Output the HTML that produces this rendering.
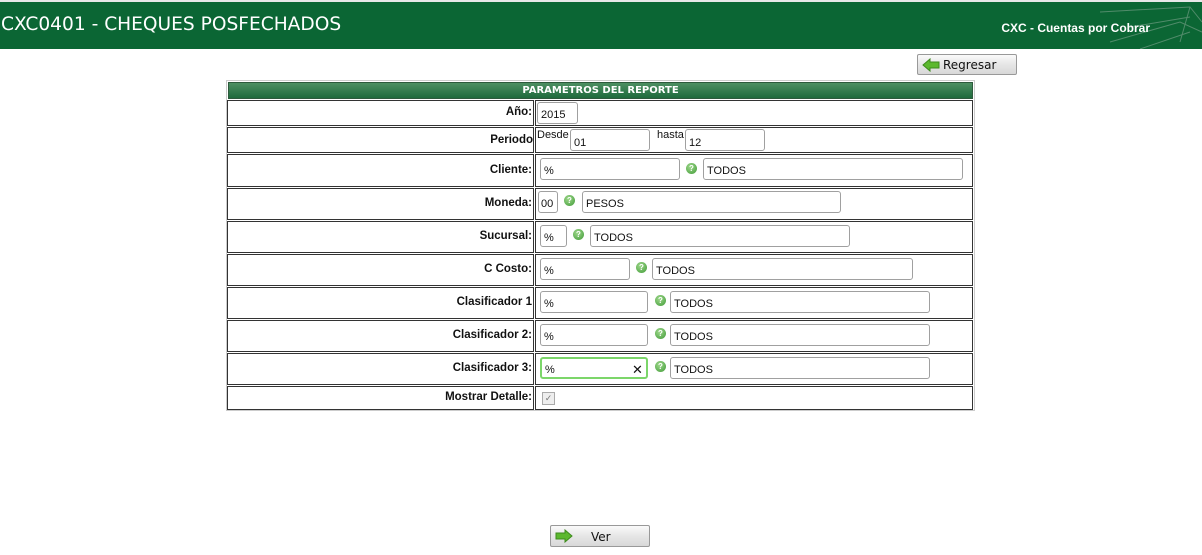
<!DOCTYPE html>
<html><head><meta charset="utf-8"><style>
body{margin:0;width:1202px;height:555px;background:#fff;position:relative;overflow:hidden;font-family:"DejaVu Sans","Liberation Sans",sans-serif;}
.a{position:absolute}
.hdr{left:0;top:0;width:1202px;height:49px;background:#0b6634;border-top:2px solid #e8e8e8;box-sizing:border-box}
.title{left:1px;top:14px;color:#fff;font-size:18.6px;letter-spacing:0}
.sub{right:52px;top:21px;color:#fff;font:bold 12px "Liberation Sans",sans-serif}
.btn{border:1px solid #999;border-radius:2px;background:linear-gradient(#fafafa,#e6e6e6 50%,#d8d8d8);box-sizing:border-box;font:12px "DejaVu Sans",sans-serif;color:#111}
.outer{left:226px;top:80px;width:749px;height:331px;border:1px solid #ccc;box-sizing:border-box}
.th{left:228px;top:82px;width:745px;height:17px;background:linear-gradient(#4d8f62,#1e6a3c);border:1px solid #2d5a3c;box-sizing:border-box;color:#fff;font:bold 10px "DejaVu Sans",sans-serif;text-align:center;line-height:15px}
.c{border:1px solid #333;box-sizing:border-box}
.lb{font:bold 11.5px "Liberation Sans",sans-serif;color:#111;text-align:right;padding-right:1px}
.in{border:1px solid #a0a0a0;border-radius:3px;box-sizing:border-box;font:11px "Liberation Sans",sans-serif;color:#111;padding-left:3px;height:22px;line-height:24px;background:#fff}
.q{width:11px;height:11px;border-radius:50%;background:radial-gradient(circle at 40% 35%,#9fd88c,#3f9a36);color:#fff;font:bold 8px sans-serif;text-align:center;line-height:11px}
.sm{font:11px "Liberation Sans",sans-serif;color:#111}
</style></head><body>
<div class="a hdr"></div>
<svg class="a" style="left:1040px;top:2px" width="162" height="47"><g stroke="#6f9c82" fill="none" opacity=".7"><path d="M60 10 L150 5 L162 20"/><path d="M70 40 L140 20 L162 30"/><path d="M100 47 L150 30"/><path d="M90 25 L150 15"/><path d="M150 5 L140 40"/></g></svg>
<div class="a title">CXC0401 - CHEQUES POSFECHADOS</div>
<div class="a sub">CXC - Cuentas por Cobrar</div>

<div class="a btn" style="left:917px;top:54px;width:100px;height:21px"><svg class="a" style="left:4px;top:3px" width="18" height="14"><path d="M1 7 L8 1 L8 4 L17 4 L17 10 L8 10 L8 13 Z" fill="#5cb82e" stroke="#3d8a1d"/></svg><span class="a" style="left:25px;top:3px">Regresar</span></div>

<div class="a outer"></div>
<div class="a th">PARAMETROS DEL REPORTE</div>

<div class="a c" style="left:227px;top:100px;width:307px;height:26px"></div><div class="a c" style="left:535px;top:100px;width:438px;height:26px"></div>
<div class="a c" style="left:227px;top:127px;width:307px;height:26px"></div><div class="a c" style="left:535px;top:127px;width:438px;height:26px"></div>
<div class="a c" style="left:227px;top:154px;width:307px;height:33px"></div><div class="a c" style="left:535px;top:154px;width:438px;height:33px"></div>
<div class="a c" style="left:227px;top:188px;width:307px;height:32px"></div><div class="a c" style="left:535px;top:188px;width:438px;height:32px"></div>
<div class="a c" style="left:227px;top:221px;width:307px;height:32px"></div><div class="a c" style="left:535px;top:221px;width:438px;height:32px"></div>
<div class="a c" style="left:227px;top:254px;width:307px;height:32px"></div><div class="a c" style="left:535px;top:254px;width:438px;height:32px"></div>
<div class="a c" style="left:227px;top:287px;width:307px;height:32px"></div><div class="a c" style="left:535px;top:287px;width:438px;height:32px"></div>
<div class="a c" style="left:227px;top:320px;width:307px;height:32px"></div><div class="a c" style="left:535px;top:320px;width:438px;height:32px"></div>
<div class="a c" style="left:227px;top:353px;width:307px;height:32px"></div><div class="a c" style="left:535px;top:353px;width:438px;height:32px"></div>
<div class="a c" style="left:227px;top:386px;width:307px;height:24px"></div><div class="a c" style="left:535px;top:386px;width:438px;height:24px"></div>

<div class="a lb" style="left:230px;width:302px;top:106px">Año:</div>
<div class="a lb" style="left:230px;width:303px;top:134px">Periodo</div>
<div class="a lb" style="left:230px;width:302px;top:164px">Cliente:</div>
<div class="a lb" style="left:230px;width:302px;top:197px">Moneda:</div>
<div class="a lb" style="left:230px;width:302px;top:230px">Sucursal:</div>
<div class="a lb" style="left:230px;width:302px;top:263px">C Costo:</div>
<div class="a lb" style="left:230px;width:302px;top:296px">Clasificador 1</div>
<div class="a lb" style="left:230px;width:302px;top:329px">Clasificador 2:</div>
<div class="a lb" style="left:230px;width:302px;top:362px">Clasificador 3:</div>
<div class="a lb" style="left:230px;width:302px;top:391px">Mostrar Detalle:</div>

<div class="a in" style="left:537px;top:102px;width:41px">2015</div>
<div class="a sm" style="left:537px;top:129px">Desde</div>
<div class="a in" style="left:570px;top:129px;width:80px;height:22px;line-height:26px">01</div>
<div class="a sm" style="left:657px;top:129px">hasta</div>
<div class="a in" style="left:685px;top:129px;width:80px;line-height:26px">12</div>

<div class="a in" style="left:540px;top:158px;width:140px">%</div><div class="a q" style="left:686px;top:163px">?</div><div class="a in" style="left:703px;top:158px;width:260px">TODOS</div>
<div class="a in" style="left:538px;top:191px;width:20px;padding-left:2px">00</div><div class="a q" style="left:564px;top:195px">?</div><div class="a in" style="left:582px;top:191px;width:259px">PESOS</div>
<div class="a in" style="left:540px;top:225px;width:27px">%</div><div class="a q" style="left:573px;top:229px">?</div><div class="a in" style="left:590px;top:225px;width:260px">TODOS</div>
<div class="a in" style="left:540px;top:258px;width:90px">%</div><div class="a q" style="left:636px;top:262px">?</div><div class="a in" style="left:652px;top:258px;width:261px">TODOS</div>
<div class="a in" style="left:540px;top:291px;width:108px">%</div><div class="a q" style="left:655px;top:295px">?</div><div class="a in" style="left:670px;top:291px;width:260px">TODOS</div>
<div class="a in" style="left:540px;top:324px;width:108px">%</div><div class="a q" style="left:655px;top:328px">?</div><div class="a in" style="left:670px;top:324px;width:260px">TODOS</div>
<div class="a in" style="left:540px;top:357px;width:108px;border:2px solid #7cd66a;line-height:22px">%<span class="a" style="left:90px;top:0;font-size:13px">✕</span></div><div class="a q" style="left:655px;top:361px">?</div><div class="a in" style="left:670px;top:357px;width:260px">TODOS</div>
<div class="a" style="left:542px;top:392px;width:11px;height:11px;border:1px solid #aaa;background:#eee;font:9px sans-serif;color:#777;line-height:11px;text-align:center">✓</div>

<div class="a btn" style="left:550px;top:525px;width:100px;height:22px"><svg class="a" style="left:4px;top:3px" width="18" height="14"><path d="M17 7 L10 1 L10 4 L1 4 L1 10 L10 10 L10 13 Z" fill="#5cb82e" stroke="#3d8a1d"/></svg><span class="a" style="left:40px;top:4px">Ver</span></div>
</body></html>
